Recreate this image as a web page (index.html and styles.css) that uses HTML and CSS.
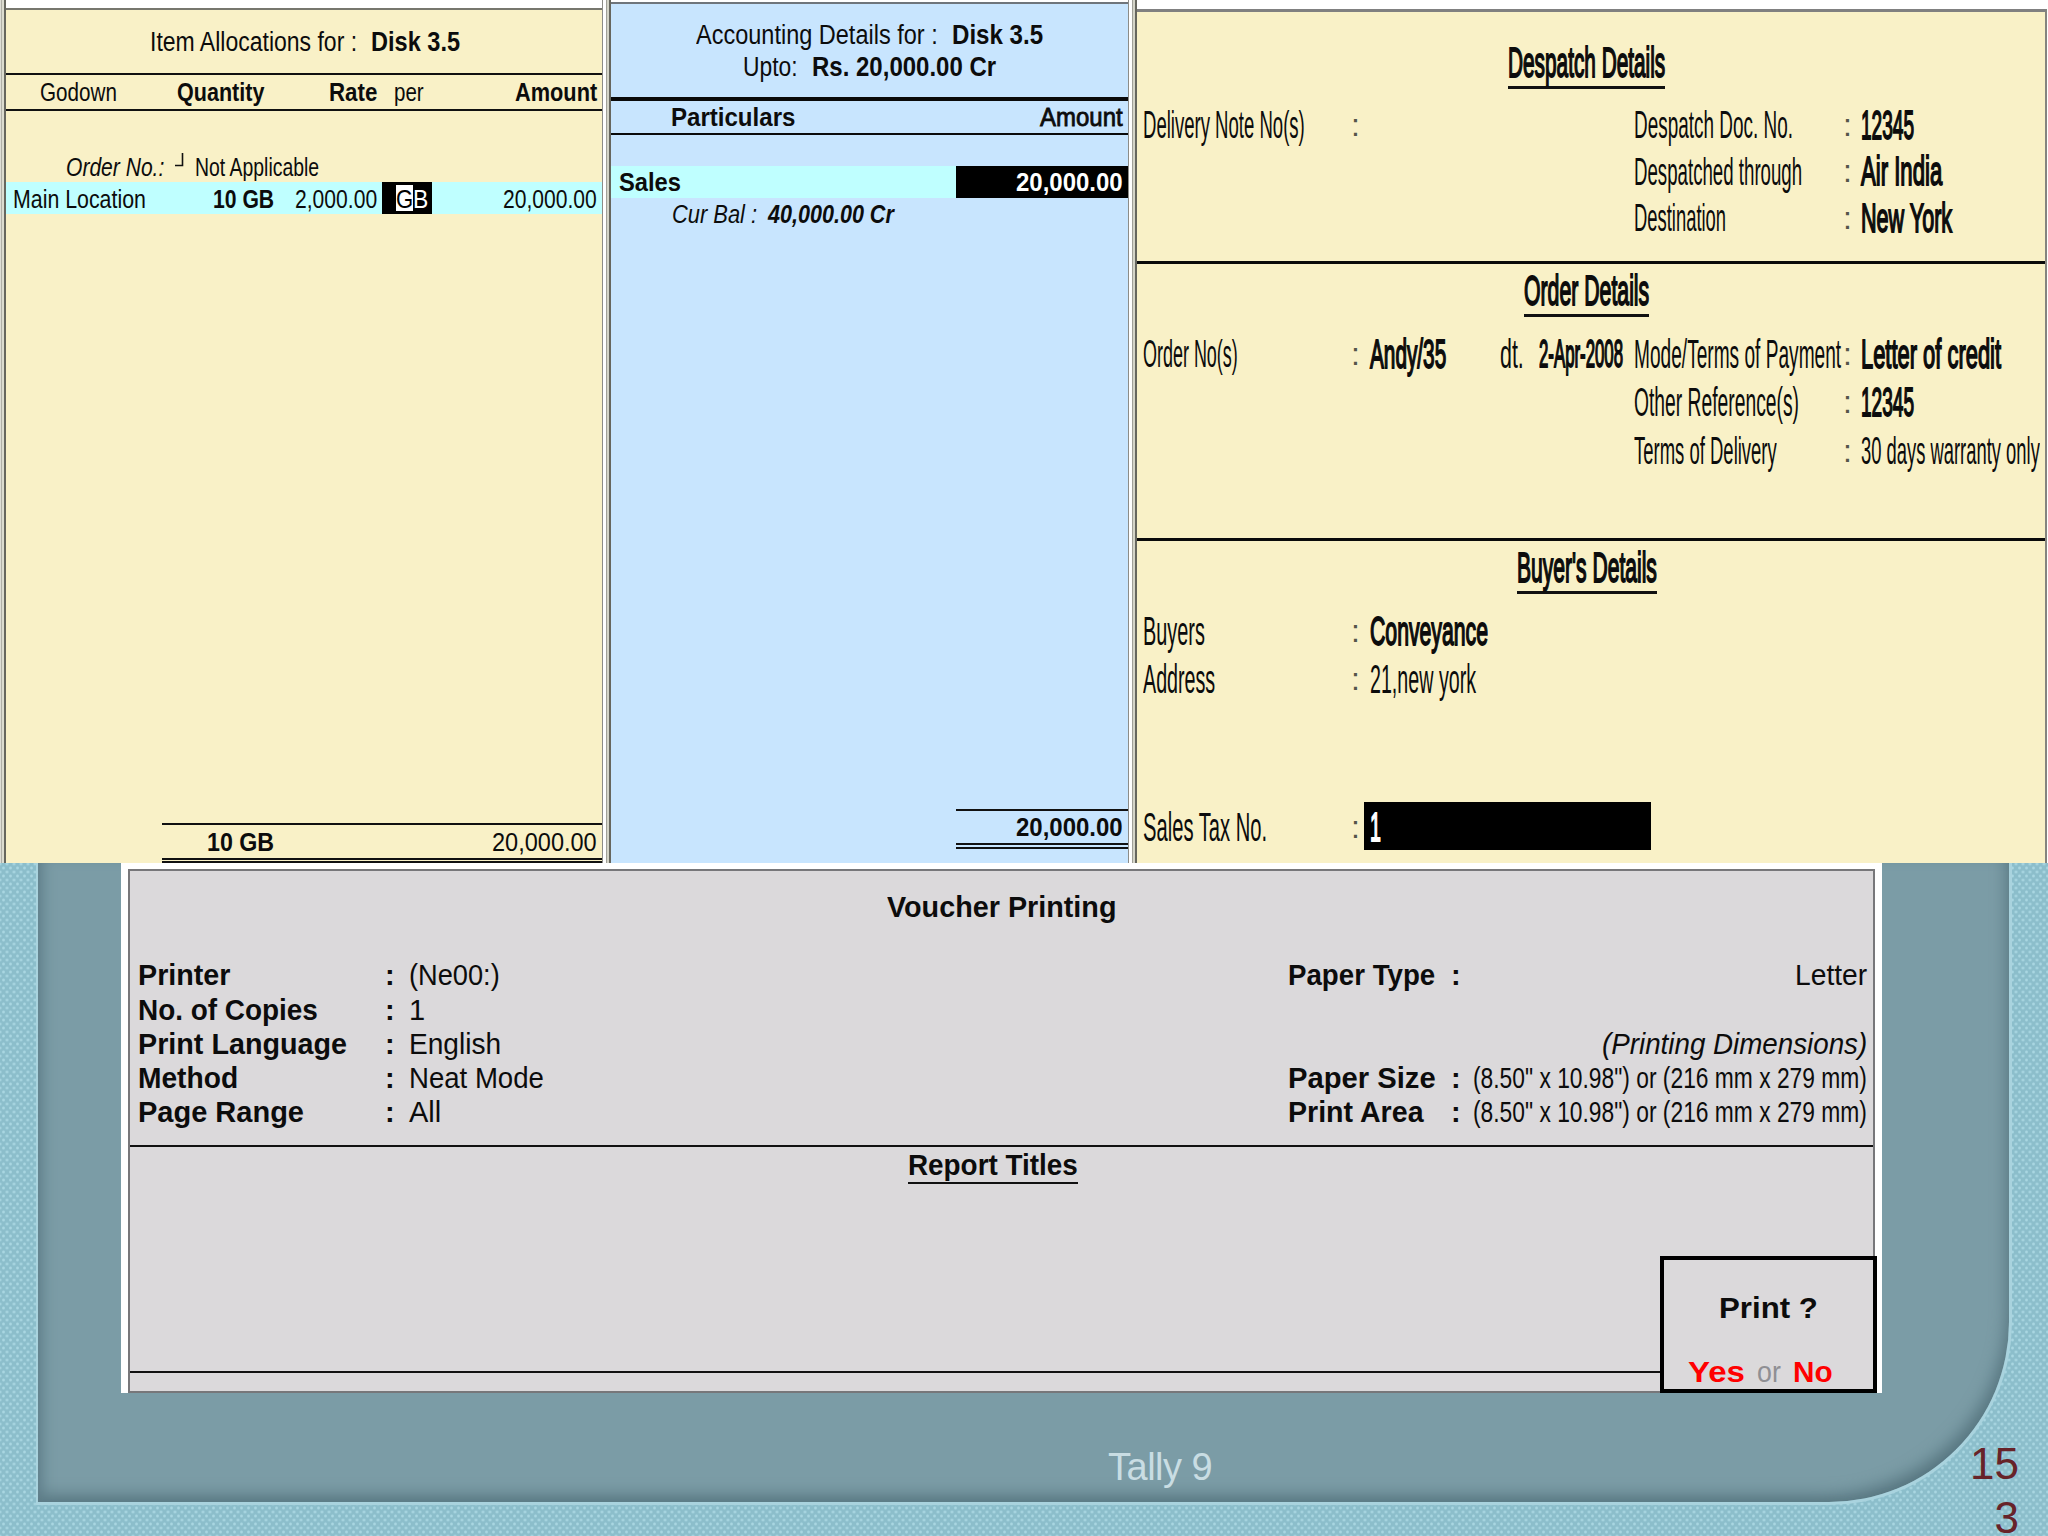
FILE: index.html
```html
<!DOCTYPE html>
<html lang="en">
<head>
  <meta charset="UTF-8">
  <title>Tally 9</title>
  <link rel="stylesheet" href="styles.css">
</head>
<body>

  <div class="windows">
    <div class="edge edge-first"></div>

    <!-- Item allocations -->
    <div class="panel alloc">
      <div class="title">
        <span class="fit" data-w="207">Item Allocations for :</span>
        <b class="fit" data-w="89">Disk 3.5</b>
      </div>
      <div class="row head">
        <span class="name"><span class="fit" data-w="77">Godown</span></span>
        <span class="qty"><b class="fit" data-w="87">Quantity</b></span>
        <span class="rate"><b class="fit" data-w="48">Rate</b></span>
        <span class="per"><span class="fit" data-w="30">per</span></span>
        <span class="amt"><b class="fit" data-w="82">Amount</b></span>
      </div>
      <div class="order">
        <i class="fit" data-w="98">Order No.:</i>
        <svg class="mark" width="9" height="14" viewBox="0 0 9 14"><path d="M7.5 0V12.5H0" fill="none" stroke="#111" stroke-width="1.6"/></svg>
        <span class="fit" data-w="124">Not Applicable</span>
      </div>
      <div class="row current">
        <span class="name"><span class="fit" data-w="133">Main Location</span></span>
        <span class="qty"><b class="fit" data-w="61">10 GB</b></span>
        <span class="rate"><span class="fit" data-w="82">2,000.00</span></span>
        <span class="per field"><span class="cursor"><span class="fit" data-w="17">G</span></span><span class="fit" data-w="15">B</span></span>
        <span class="amt"><span class="fit" data-w="94">20,000.00</span></span>
      </div>
      <div class="row total">
        <span class="qty"><b class="fit" data-w="67">10 GB</b></span>
        <span class="amt"><span class="fit" data-w="105">20,000.00</span></span>
      </div>
    </div>

    <div class="edge"></div>

    <!-- Accounting details -->
    <div class="panel acct">
      <div class="title">
        <div><span class="fit" data-w="242">Accounting Details for :</span> <b class="fit" data-w="91">Disk 3.5</b></div>
        <div><span class="fit" data-w="55">Upto:</span> <b class="fit" data-w="184">Rs. 20,000.00 Cr</b></div>
      </div>
      <div class="row head">
        <b class="fit" data-w="124">Particulars</b>
        <span class="fit semi" data-w="83">Amount</span>
      </div>
      <div class="row sales">
        <b class="fit" data-w="62">Sales</b>
        <span class="field"><b class="fit" data-w="107">20,000.00</b></span>
      </div>
      <div class="balance"><i class="fit" data-w="85">Cur Bal :</i> <b><i class="fit" data-w="126">40,000.00 Cr</i></b></div>
      <div class="total"><b class="fit" data-w="107">20,000.00</b></div>
    </div>

    <div class="edge"></div>

    <!-- Despatch, order and buyer -->
    <div class="panel desp">
      <section class="despatch">
        <h2 class="fit" data-w="157">Despatch Details</h2>
        <div class="row">
          <span class="c1"><span class="fit" data-w="162">Delivery Note No(s)</span></span><span class="c2">:</span>
          <span class="c6"><span class="fit" data-w="159">Despatch Doc. No.</span></span><span class="c7">:</span>
          <span class="c8 lg"><b class="fit" data-w="53">12345</b></span>
        </div>
        <div class="row">
          <span class="c6"><span class="fit" data-w="168">Despatched through</span></span><span class="c7">:</span>
          <span class="c8 lg"><b class="fit" data-w="81">Air India</b></span>
        </div>
        <div class="row">
          <span class="c6"><span class="fit" data-w="92">Destination</span></span><span class="c7">:</span>
          <span class="c8 lg"><b class="fit" data-w="91">New York</b></span>
        </div>
      </section>
      <section class="orders">
        <h2 class="fit" data-w="125">Order Details</h2>
        <div class="row">
          <span class="c1"><span class="fit" data-w="95">Order No(s)</span></span><span class="c2">:</span>
          <span class="c3 lg"><b class="fit" data-w="76">Andy/35</b></span>
          <span class="c4 lg"><span class="fit" data-w="24">dt.</span></span>
          <span class="c5"><b class="fit" data-w="84">2-Apr-2008</b></span>
          <span class="c6 lg"><span class="fit" data-w="207">Mode/Terms of Payment</span></span><span class="c7">:</span>
          <span class="c8 lg"><b class="fit" data-w="140">Letter of credit</b></span>
        </div>
        <div class="row">
          <span class="c6 lg"><span class="fit" data-w="165">Other Reference(s)</span></span><span class="c7">:</span>
          <span class="c8 lg"><b class="fit" data-w="53">12345</b></span>
        </div>
        <div class="row">
          <span class="c6"><span class="fit" data-w="143">Terms of Delivery</span></span><span class="c7">:</span>
          <span class="c8"><span class="fit" data-w="179">30 days warranty only</span></span>
        </div>
      </section>
      <section class="buyer">
        <h2 class="fit" data-w="140">Buyer's Details</h2>
        <div class="row">
          <span class="c1 lg"><span class="fit" data-w="62">Buyers</span></span><span class="c2">:</span>
          <span class="c3 lg"><b class="fit" data-w="118">Conveyance</b></span>
        </div>
        <div class="row">
          <span class="c1 lg"><span class="fit" data-w="72">Address</span></span><span class="c2">:</span>
          <span class="c3 lg"><span class="fit" data-w="106">21,new york</span></span>
        </div>
        <div class="row tax">
          <span class="c1 lg"><span class="fit" data-w="124">Sales Tax No.</span></span><span class="c2">:</span>
          <span class="c3 field"><b class="fit" data-w="11">1</b></span>
        </div>
      </section>
    </div>
  </div>

  <div class="board">
    <!-- Voucher printing -->
    <div class="dialog">
      <div class="sheet">
        <div class="heading"><b class="fit" data-w="229">Voucher Printing</b></div>
        <div class="row">
          <b class="p1"><span class="fit" data-w="92">Printer</span></b><b class="p2">:</b><span class="p3"><span class="fit" data-w="91">(Ne00:)</span></span>
          <b class="p4"><span class="fit" data-w="147">Paper Type</span></b><b class="p5">:</b><span class="p6"><span class="fit" data-w="72">Letter</span></span>
        </div>
        <div class="row">
          <b class="p1"><span class="fit" data-w="180">No. of Copies</span></b><b class="p2">:</b><span class="p3"><span class="fit" data-w="16">1</span></span>
        </div>
        <div class="row">
          <b class="p1"><span class="fit" data-w="209">Print Language</span></b><b class="p2">:</b><span class="p3"><span class="fit" data-w="92">English</span></span>
          <span class="p6"><i class="fit" data-w="265">(Printing Dimensions)</i></span>
        </div>
        <div class="row">
          <b class="p1"><span class="fit" data-w="100">Method</span></b><b class="p2">:</b><span class="p3"><span class="fit" data-w="135">Neat Mode</span></span>
          <b class="p4"><span class="fit" data-w="148">Paper Size</span></b><b class="p5">:</b><span class="p6"><span class="fit" data-w="394">(8.50" x 10.98") or (216 mm x 279 mm)</span></span>
        </div>
        <div class="row">
          <b class="p1"><span class="fit" data-w="166">Page Range</span></b><b class="p2">:</b><span class="p3"><span class="fit" data-w="32">All</span></span>
          <b class="p4"><span class="fit" data-w="136">Print Area</span></b><b class="p5">:</b><span class="p6"><span class="fit" data-w="394">(8.50" x 10.98") or (216 mm x 279 mm)</span></span>
        </div>
        <div class="titles"><b class="fit" data-w="170">Report Titles</b></div>
      </div>
      <div class="confirm">
        <b class="fit" data-w="99">Print ?</b>
        <div class="answer">
          <b class="fit" data-w="57">Yes</b>
          <span class="fit" data-w="24">or</span>
          <b class="fit" data-w="40">No</b>
        </div>
      </div>
    </div>
    <div class="footer">Tally 9</div>
  </div>

  <div class="page-number">15<br>3</div>

  <script>
    document.querySelectorAll('.fit').forEach(function(el) {
      var natural = el.offsetWidth;
      var wanted = Number(el.dataset.w);
      el.style.transform = 'scaleX(' + wanted / natural + ')';
      el.style.marginRight = (wanted - natural) + 'px';
    });
  </script>

</body>
</html>
```

FILE: styles.css
```css
* {
  box-sizing: border-box;
}

body {
  margin: 0;
  width: 2048px;
  height: 1536px;
  overflow: hidden;
  position: relative;
  font-family: "Liberation Sans", Arial, sans-serif;
  color: #0c0c0c;
  background-color: #8cbecb;
  background-image:
    radial-gradient(circle, #a9d6e1 0.8px, transparent 2px),
    radial-gradient(circle, #a9d6e1 0.8px, transparent 2px);
  background-size: 7px 8px;
  background-position: 0 0, 3.5px 4px;
}

.fit {
  display: inline-block;
  flex: none;
  white-space: nowrap;
  transform-origin: left center;
}

.semi {
  -webkit-text-stroke: 0.8px;
}

/* Top windows */
.windows {
  display: flex;
  height: 863px;
  background-color: #fff;
}

.edge {
  width: 9px;
  background: linear-gradient(90deg, #8c8c88 0 1px, #fff 1px 3px, #fff 3px 4px, #a0a098 4px 5px, #d4d4c8 5px 7px, #66665e 7px 9px);
}

.edge-first {
  width: 6px;
  background: linear-gradient(90deg, #deded6 0 1px, #b0b0a8 1px 2px, #dcdcd0 2px 4px, #66665e 4px 6px);
}

.panel {
  display: flex;
  flex-direction: column;
}

.alloc {
  width: 596px;
  margin-top: 8px;
  border-top: 2px solid #77776e;
  background-color: #f9f1c7;
  font-size: 26px;
}

.alloc .title {
  display: flex;
  justify-content: center;
  gap: 13px;
  height: 63px;
  line-height: 65px;
  font-size: 27px;
  padding-left: 2px;
}

.alloc .row {
  display: grid;
  grid-template-columns: 208px 60px 103px 80px 1fr;
  height: 32px;
  line-height: 34px;
}

.alloc .name { grid-column: 1; padding-left: 7px; }
.alloc .qty { grid-column: 2; justify-self: end; }
.alloc .rate { grid-column: 3; justify-self: end; }
.alloc .per { grid-column: 4; }
.alloc .amt { grid-column: 5; justify-self: end; padding-right: 5px; }

.alloc .head {
  height: 38px;
  line-height: 34px;
  border-top: 2px solid #111;
  border-bottom: 2px solid #111;
  grid-template-columns: 208px 50px 113px 80px 1fr;
}

.alloc .head .name { padding-left: 34px; }
.alloc .head .per { padding-left: 17px; }

.order {
  display: flex;
  height: 32px;
  margin-top: 39px;
  padding-left: 60px;
  line-height: 34px;
}

.mark {
  margin: 3px 11px 0 11px;
}

.alloc .current {
  background-color: #bfffff;
}

.alloc .field {
  width: 50px;
  height: 32px;
  margin-left: 5px;
  padding-left: 14px;
  background-color: #000;
  color: #fff;
  display: flex;
}

.cursor {
  width: 17px;
  height: 26px;
  margin-top: 3px;
  line-height: 28px;
  background-color: #fff;
  color: #000;
}

.alloc .total {
  width: 440px;
  height: 40px;
  margin: auto 0 0 auto;
  border-top: 2px solid #111;
  border-bottom: 5px double #111;
  grid-template-columns: 52px 60px 103px 80px 1fr;
}

/* Blue window */
.acct {
  width: 517px;
  margin-top: 2px;
  border-top: 2px solid #6f757b;
  background-color: #c8e5fe;
  font-size: 26px;
  line-height: 32px;
}

.acct .title {
  height: 93px;
  padding-top: 15px;
  font-size: 27px;
}

.acct .title div {
  display: flex;
  justify-content: center;
  gap: 14px;
}

.acct .row {
  display: flex;
  justify-content: space-between;
}

.acct .head {
  border-top: 4px solid #0a0a0a;
  border-bottom: 2px solid #0a0a0a;
  padding: 0 5px 0 60px;
}

.acct .sales {
  height: 32px;
  margin-top: 31px;
  padding-left: 8px;
  background-color: #bfffff;
}

.acct .field {
  width: 172px;
  padding-right: 5px;
  text-align: right;
  background-color: #000;
  color: #fff;
}

.balance {
  display: flex;
  gap: 11px;
  padding-left: 61px;
}

.acct .total {
  width: 172px;
  margin: auto 0 14px auto;
  padding-right: 5px;
  text-align: right;
  border-top: 2px solid #111;
  border-bottom: 6px double #111;
}

/* Despatch window */
.desp {
  width: 910px;
  margin-top: 9px;
  border-top: 3px solid #808080;
  border-right: 2px solid #85857e;
  background-color: #f9f1c7;
  font-size: 38px;
  line-height: 48.5px;
}

.desp section {
  display: flex;
  flex-direction: column;
}

.desp h2, .desp b {
  font-weight: normal;
  -webkit-text-stroke: 1.8px;
}

.desp h2 {
  align-self: flex-start;
  margin: 5.5px 0 12px 387px;
  padding-bottom: 3px;
  font-size: 42px;
  line-height: 41px;
  border-bottom: 3px solid #111;
}

.desp .despatch {
  height: 249px;
  line-height: 46.5px;
}

.desp .despatch h2 {
  margin: 29.5px 0 12px 371px;
}

.desp .orders {
  height: 277px;
  border-top: 3px solid #0a0a0a;
}

.desp .buyer {
  flex: 1;
  border-top: 3px solid #0a0a0a;
}

.desp .buyer h2 {
  margin-left: 380px;
}

.desp .row {
  display: grid;
  grid-template-columns: 211px 16px 130px 39px 94px 213px 15px 1fr;
  height: 48.5px;
  padding-left: 6px;
}

.desp .despatch .row { height: 46.5px; }

.c1 { grid-column: 1; }
.c2 { grid-column: 2; }
.c3 { grid-column: 3; }
.c4 { grid-column: 4; }
.c5 { grid-column: 5; }
.c6 { grid-column: 6; padding-left: 1px; }
.c7 { grid-column: 7; }
.c8 { grid-column: 8; }

.c1, .c5, .c6, .c8 {
  padding-top: 1.5px;
}

.c2, .c7 {
  font-size: 32px;
  color: #55554a;
  padding-top: 1px;
  margin-left: -3px;
}

.lg {
  font-size: 41px;
  padding-top: 1px;
}

.desp .tax {
  margin-top: 99px;
}

.desp .field {
  width: 287px;
  height: 48.5px;
  margin-left: -6px;
  padding: 1px 0 0 6px;
  font-size: 41px;
  background-color: #000;
  color: #fff;
}

/* Slide board */
.board {
  height: 642px;
  margin: 0 36px;
  border: solid #a9d3de;
  border-width: 0 3px 3px 2px;
  border-radius: 0 0 183px 0;
  background-color: #7b9ca6;
  box-shadow: inset 12px 0 14px -8px #5d7c88, inset -8px -12px 16px -6px #56757f;
}

.dialog {
  position: relative;
  width: 1761px;
  height: 530px;
  margin-left: 83px;
  padding: 6px 7px 0;
  background-color: #fff;
}

.sheet {
  height: 524px;
  border: 2px solid #77777a;
  background-color: #dbd9db;
  font-size: 29px;
  line-height: 34.3px;
}

.heading {
  text-align: center;
  padding: 19px 0 34px;
}

.sheet .row {
  display: grid;
  grid-template-columns: 247px 24px 879px 163px 20px 1fr;
  height: 34.3px;
  padding: 0 6px 0 8px;
}

.sheet .row > * { grid-row: 1; }

.p1 { grid-column: 1; }
.p2 { grid-column: 2; }
.p3 { grid-column: 3; }
.p4 { grid-column: 4; }
.p5 { grid-column: 5; }
.p6 { grid-column: 4 / 7; justify-self: end; }

.titles {
  height: 228px;
  margin-top: 15px;
  padding: 1px 17px 0 0;
  text-align: center;
  border-top: 2px solid #111;
  border-bottom: 2px solid #111;
}

.titles .fit {
  border-bottom: 2px solid #111;
}

.confirm {
  position: absolute;
  right: 5px;
  bottom: 0;
  width: 217px;
  height: 137px;
  padding-top: 31px;
  border: 4px solid #000;
  background-color: #dbd9db;
  font-size: 29px;
  line-height: 34px;
  text-align: center;
}

.answer {
  display: flex;
  gap: 12px;
  margin-top: 30px;
  padding-left: 24px;
  color: #f00;
}

.answer span {
  color: #8f8f94;
}

.footer {
  margin: 52px 0 0 1070px;
  font-size: 38px;
  line-height: 44px;
  letter-spacing: -0.5px;
  color: #c9dde3;
}

.page-number {
  position: absolute;
  right: 29px;
  top: 1437px;
  font-size: 44px;
  line-height: 54px;
  text-align: right;
  color: #672329;
}
```
